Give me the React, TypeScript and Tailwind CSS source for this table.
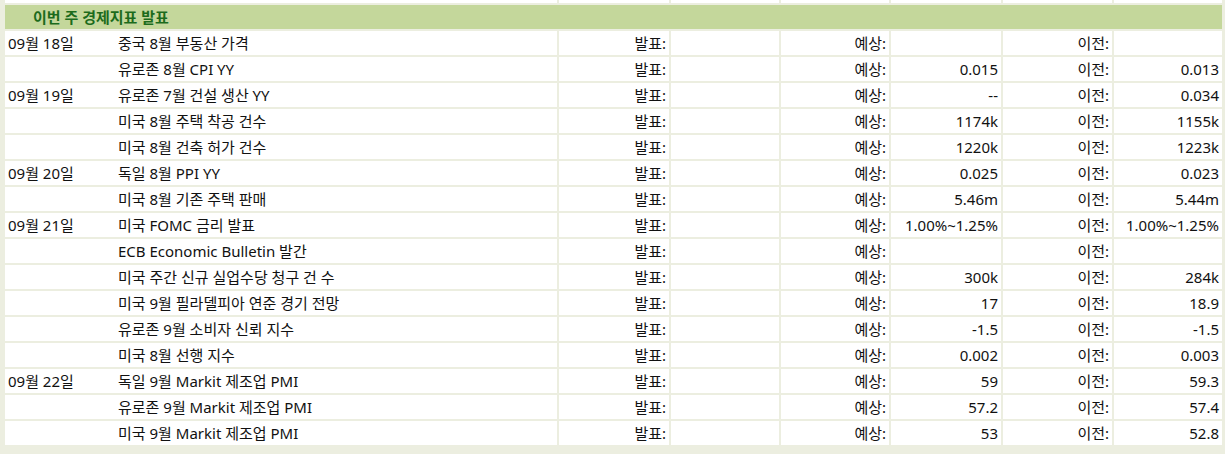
const rows = [
  { date: "09월 18일", name: "중국 8월 부동산 가격", est: "", prev: "" },
  { date: "", name: "유로존 8월 CPI YY", est: "0.015", prev: "0.013" },
  { date: "09월 19일", name: "유로존 7월 건설 생산 YY", est: "--", prev: "0.034" },
  { date: "", name: "미국 8월 주택 착공 건수", est: "1174k", prev: "1155k" },
  { date: "", name: "미국 8월 건축 허가 건수", est: "1220k", prev: "1223k" },
  { date: "09월 20일", name: "독일 8월 PPI YY", est: "0.025", prev: "0.023" },
  { date: "", name: "미국 8월 기존 주택 판매", est: "5.46m", prev: "5.44m" },
  { date: "09월 21일", name: "미국 FOMC 금리 발표", est: "1.00%~1.25%", prev: "1.00%~1.25%" },
  { date: "", name: "ECB Economic Bulletin 발간", est: "", prev: "" },
  { date: "", name: "미국 주간 신규 실업수당 청구 건 수", est: "300k", prev: "284k" },
  { date: "", name: "미국 9월 필라델피아 연준 경기 전망", est: "17", prev: "18.9" },
  { date: "", name: "유로존 9월 소비자 신뢰 지수", est: "-1.5", prev: "-1.5" },
  { date: "", name: "미국 8월 선행 지수", est: "0.002", prev: "0.003" },
  { date: "09월 22일", name: "독일 9월 Markit 제조업 PMI", est: "59", prev: "59.3" },
  { date: "", name: "유로존 9월 Markit 제조업 PMI", est: "57.2", prev: "57.4" },
  { date: "", name: "미국 9월 Markit 제조업 PMI", est: "53", prev: "52.8" },
];

const App = () => {
  const cell = "bg-white h-[24px] flex items-center";
  const right = `${cell} justify-end pr-[3px]`;

  return (
    <div className="min-h-screen bg-white text-[15px] text-[#111] leading-none font-['Noto_Sans','Noto_Sans_CJK_KR',sans-serif]">
      <div className="w-fit bg-[#eceee0] pl-[5px] pr-[3px] pb-[9px] grid grid-cols-[552px_110px_108px_108px_110px_109px_108px] gap-[2px]">
        {/* partial row cut at the top */}
        {[0, 1, 2, 3, 4, 5, 6].map((i) => (
          <div key={i} className="bg-white h-[3px]" />
        ))}

        <div className="col-span-7 bg-[#c4d79b] h-[24px] flex items-center pl-[28px] font-bold text-[#1c6b1c]">
          이번 주 경제지표 발표
        </div>

        {rows.map((r, i) => (
          <div key={i} className="contents">
            <div className={`${cell} pl-[3px]`}>
              <span className="w-[110px] shrink-0">{r.date}</span>
              <span>{r.name}</span>
            </div>
            <div className={right}>발표:</div>
            <div className={right}></div>
            <div className={right}>예상:</div>
            <div className={right}>{r.est}</div>
            <div className={right}>이전:</div>
            <div className={right}>{r.prev}</div>
          </div>
        ))}
      </div>
    </div>
  );
};

export default App;
